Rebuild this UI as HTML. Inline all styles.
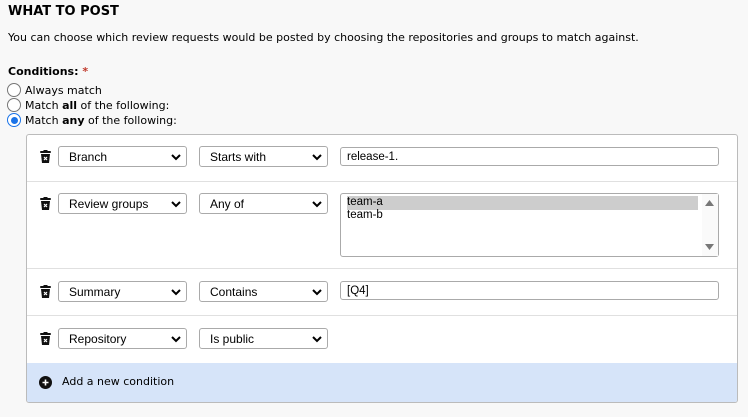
<!DOCTYPE html>
<html><head><style>
body{margin:0;width:748px;height:417px;background:#f8f8f8;font-family:"DejaVu Sans",Verdana,sans-serif;font-size:11px;color:#000;position:relative;overflow:hidden}
.a{position:absolute;white-space:nowrap}
h1{position:absolute;left:8px;top:4px;margin:0;font-size:13px;font-weight:bold}
.box{position:absolute;left:26px;top:134px;width:710px;height:267px;border:1px solid #bbb;border-radius:3px;background:#fff;overflow:hidden}
.sep{position:absolute;left:0;right:0;height:1px;background:#e0e0e0}
.sel{position:absolute;width:127px;height:19px;border:1px solid #aaa;border-radius:3px;background:#fff;font-family:"Liberation Sans",Arial,sans-serif;font-size:12px;line-height:20px;box-sizing:content-box}
.sel span{position:absolute;left:10px;top:0}
.sel svg{position:absolute;right:5px;top:7px}
.inp{position:absolute;left:313px;width:377px;height:17px;border:1px solid #aaa;border-radius:3px;background:#fff;font-family:"Liberation Sans",Arial,sans-serif;font-size:11.5px;line-height:18px}
.inp span{position:absolute;left:6px}
.trash{position:absolute;left:13px}
.radio{position:absolute;left:7px;width:12px;height:12px;border:1px solid #767676;border-radius:50%;background:#fff}
.foot{position:absolute;left:0;right:0;top:228px;height:39px;background:#d6e4f9}
</style></head><body>
<h1>WHAT TO POST</h1>
<div class="a" style="left:8px;top:31px">You can choose which review requests would be posted by choosing the repositories and groups to match against.</div>
<div class="a" style="left:8px;top:65px;font-weight:bold">Conditions: <span style="color:#c0392b">*</span></div>
<div class="radio" style="top:83px"></div>
<div class="a" style="left:25px;top:84px">Always match</div>
<div class="radio" style="top:98px"></div>
<div class="a" style="left:25px;top:99px">Match <b>all</b> of the following:</div>
<div class="radio" style="top:113px;border-color:#1a73e8;background:#fff"><div style="position:absolute;left:2.5px;top:2.5px;width:7px;height:7px;border-radius:50%;background:#1a73e8"></div></div>
<div class="a" style="left:25px;top:114px">Match <b>any</b> of the following:</div>

<div class="box">
<svg class="trash" style="top:15px" width="11" height="13" viewBox="0 0 11 13"><rect x="0" y="1" width="11" height="2" rx="1" fill="#111"/><rect x="3.5" y="0" width="4" height="2" fill="#111"/><path d="M1 4h9l-1 9H2z" fill="#111"/><path d="M4 7l3 3M7 7l-3 3" stroke="#fff" stroke-width="1.2"/></svg>
<div class="sel" style="left:31px;top:11px"><span>Branch</span><svg width="10" height="7" viewBox="0 0 10 7"><path d="M1 1l4 4 4-4" stroke="#000" stroke-width="2" fill="none"/></svg></div>
<div class="sel" style="left:172px;top:11px"><span>Starts with</span><svg width="10" height="7" viewBox="0 0 10 7"><path d="M1 1l4 4 4-4" stroke="#000" stroke-width="2" fill="none"/></svg></div>
<div class="inp" style="top:12px"><span>release-1.</span></div>
<div class="sep" style="top:46px"></div>
<svg class="trash" style="top:62px" width="11" height="13" viewBox="0 0 11 13"><rect x="0" y="1" width="11" height="2" rx="1" fill="#111"/><rect x="3.5" y="0" width="4" height="2" fill="#111"/><path d="M1 4h9l-1 9H2z" fill="#111"/><path d="M4 7l3 3M7 7l-3 3" stroke="#fff" stroke-width="1.2"/></svg>
<div class="sel" style="left:31px;top:58px"><span>Review groups</span><svg width="10" height="7" viewBox="0 0 10 7"><path d="M1 1l4 4 4-4" stroke="#000" stroke-width="2" fill="none"/></svg></div>
<div class="sel" style="left:172px;top:58px"><span>Any of</span><svg width="10" height="7" viewBox="0 0 10 7"><path d="M1 1l4 4 4-4" stroke="#000" stroke-width="2" fill="none"/></svg></div>
<div class="inp" style="top:58px;height:62px;line-height:13px">
 <div style="position:absolute;left:6px;top:2px;width:351px;height:14px;background:#cdcdcd"></div>
 <span style="top:2px">team-a</span><span style="top:15px">team-b</span>
 <div style="position:absolute;right:0;top:0;width:16px;height:62px;background:#fafafa"></div>
 <svg style="position:absolute;right:4px;top:6px" width="9" height="6"><path d="M0 6L4.5 0 9 6z" fill="#777"/></svg>
 <svg style="position:absolute;right:4px;top:50px" width="9" height="6"><path d="M0 0L4.5 6 9 0z" fill="#777"/></svg>
</div>
<div class="sep" style="top:133px"></div>
<svg class="trash" style="top:150px" width="11" height="13" viewBox="0 0 11 13"><rect x="0" y="1" width="11" height="2" rx="1" fill="#111"/><rect x="3.5" y="0" width="4" height="2" fill="#111"/><path d="M1 4h9l-1 9H2z" fill="#111"/><path d="M4 7l3 3M7 7l-3 3" stroke="#fff" stroke-width="1.2"/></svg>
<div class="sel" style="left:31px;top:146px"><span>Summary</span><svg width="10" height="7" viewBox="0 0 10 7"><path d="M1 1l4 4 4-4" stroke="#000" stroke-width="2" fill="none"/></svg></div>
<div class="sel" style="left:172px;top:146px"><span>Contains</span><svg width="10" height="7" viewBox="0 0 10 7"><path d="M1 1l4 4 4-4" stroke="#000" stroke-width="2" fill="none"/></svg></div>
<div class="inp" style="top:146px"><span>[Q4]</span></div>
<div class="sep" style="top:180px"></div>
<svg class="trash" style="top:197px" width="11" height="13" viewBox="0 0 11 13"><rect x="0" y="1" width="11" height="2" rx="1" fill="#111"/><rect x="3.5" y="0" width="4" height="2" fill="#111"/><path d="M1 4h9l-1 9H2z" fill="#111"/><path d="M4 7l3 3M7 7l-3 3" stroke="#fff" stroke-width="1.2"/></svg>
<div class="sel" style="left:31px;top:193px"><span>Repository</span><svg width="10" height="7" viewBox="0 0 10 7"><path d="M1 1l4 4 4-4" stroke="#000" stroke-width="2" fill="none"/></svg></div>
<div class="sel" style="left:172px;top:193px"><span>Is public</span><svg width="10" height="7" viewBox="0 0 10 7"><path d="M1 1l4 4 4-4" stroke="#000" stroke-width="2" fill="none"/></svg></div>
<div class="foot">
 <svg style="position:absolute;left:12px;top:13px" width="13" height="13" viewBox="0 0 13 13"><circle cx="6.5" cy="6.5" r="6.5" fill="#111"/><path d="M6.5 3.5v6M3.5 6.5h6" stroke="#fff" stroke-width="1.6"/></svg>
 <div class="a" style="left:35px;top:12px">Add a new condition</div>
</div>
</div>
</body></html>
